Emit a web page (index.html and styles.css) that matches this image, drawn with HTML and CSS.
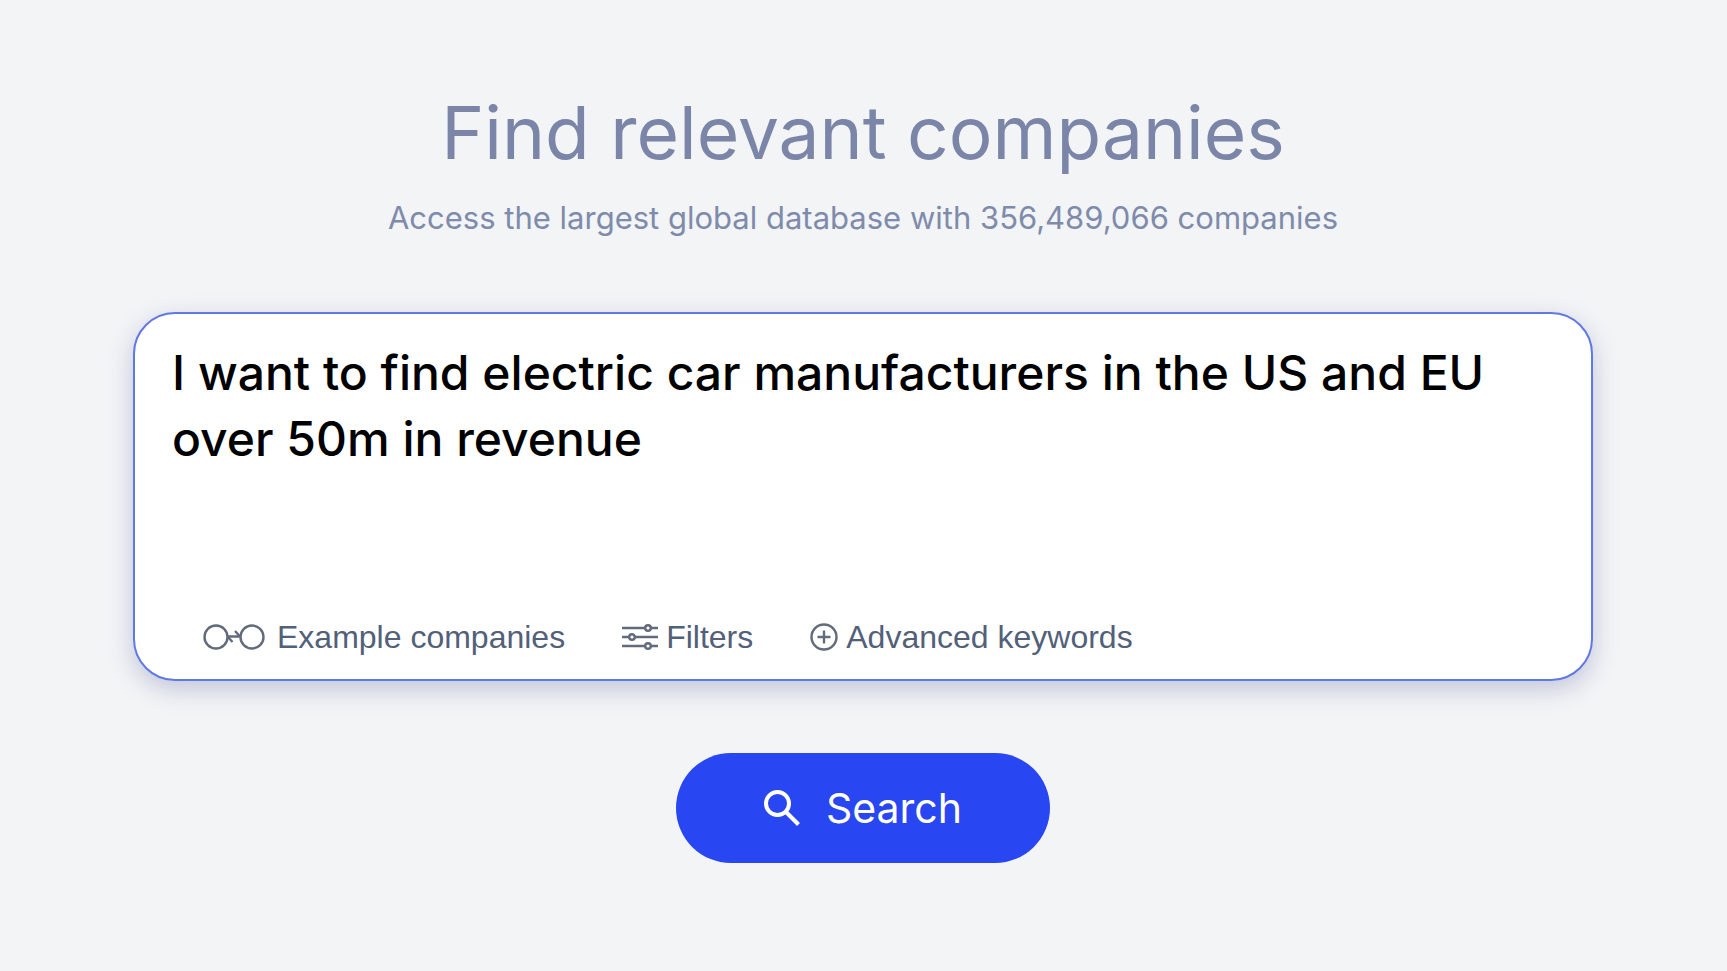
FILE: index.html
```html
<!DOCTYPE html>
<html lang="en">
<head>
<meta charset="utf-8">
<meta name="viewport" content="width=device-width, initial-scale=1">
<title>Find relevant companies</title>
<link rel="stylesheet" href="styles.css">
</head>
<body>
<main class="page">
  <h1 class="title">Find relevant companies</h1>
  <p class="subtitle">Access the largest global database with 356,489,066 companies</p>
  <form class="search">
    <div class="card">
      <textarea class="query" rows="3" aria-label="Describe the companies" spellcheck="false">I want to find electric car manufacturers in the US and EU over 50m in revenue</textarea>
      <div class="tools">
        <button class="tool tool-wide" type="button">
          <svg class="icon" width="62" height="28" viewBox="0 0 62 28" aria-hidden="true"><circle cx="13" cy="14" r="11.5"/><circle cx="49" cy="14" r="11.5"/><path d="M25 13.5h12M24.500 13.500l5 5.500M32 8l5 5.500"/></svg>
          Example companies
        </button>
        <button class="tool" type="button">
          <svg class="icon" width="36" height="28" viewBox="0 0 36 28" aria-hidden="true"><path d="M0 5h23M29 5h7M0 14h7M13 14h23M0 23h23M29 23h7"/><circle cx="26" cy="5" r="2.800"/><circle cx="10" cy="14" r="2.800"/><circle cx="26" cy="23" r="2.800"/></svg>
          Filters
        </button>
        <button class="tool" type="button">
          <svg class="icon" width="28" height="28" viewBox="0 0 28 28" aria-hidden="true"><circle cx="14" cy="14" r="12.500"/><path d="M14 7.500v13M7.500 14h13"/></svg>
          Advanced keywords
        </button>
      </div>
    </div>
    <button class="submit" type="submit">
      <svg class="icon-search" width="36" height="36" viewBox="0 0 36 36" aria-hidden="true"><circle cx="13.500" cy="13.500" r="11.500"/><path d="M21.500 21.500l13 13"/></svg>
      Search
    </button>
  </form>
</main>
</body>
</html>
```
FILE: styles.css
```css
* { box-sizing: border-box; }
body { margin: 0; background: #f2f4f6; font-family: Inter, "Liberation Sans", sans-serif; }
.page { padding: 90px 134px 40px 133px; }
.title { margin: 0; font-size: 73px; line-height: 86px; font-weight: 400; color: #7a85a8; text-align: center; }
.subtitle { margin: 24px 0 0; font-size: 31px; line-height: 36px; color: #7f8bab; text-align: center; }
.search { display: flex; flex-direction: column; align-items: center; margin-top: 76px; }
.card { width: 100%; padding: 26px 38px 22px 37px; background: #fff; border: 2px solid #6078e4; border-radius: 42px; box-shadow: 0 8px 24px rgb(70 80 140 / 28%); }
.query { display: block; width: 100%; padding: 0; border: 0; outline: 0; resize: none; background: none; color: #000; font: 500 48px/66px Inter, "Liberation Sans", sans-serif; }
.tools { display: flex; flex-wrap: wrap; gap: 57px; margin-top: 79px; padding-left: 31px; }
.tool { display: flex; align-items: center; gap: 8px; padding: 0; border: 0; background: none; color: #526079; font: 32px/40px "Liberation Sans", Arial, sans-serif; cursor: pointer; }
.tool-wide { gap: 12px; }
.icon { fill: none; stroke: #626b7c; stroke-width: 2.4; }
.submit { display: flex; align-items: center; justify-content: center; gap: 26px; min-width: 374px; height: 110px; margin-top: 72px; border: 0; border-radius: 55px; background: #2846f2; color: #fff; font: 41px/50px Inter, "Liberation Sans", sans-serif; cursor: pointer; }
.icon-search { fill: none; stroke: currentColor; stroke-width: 4; }
```
